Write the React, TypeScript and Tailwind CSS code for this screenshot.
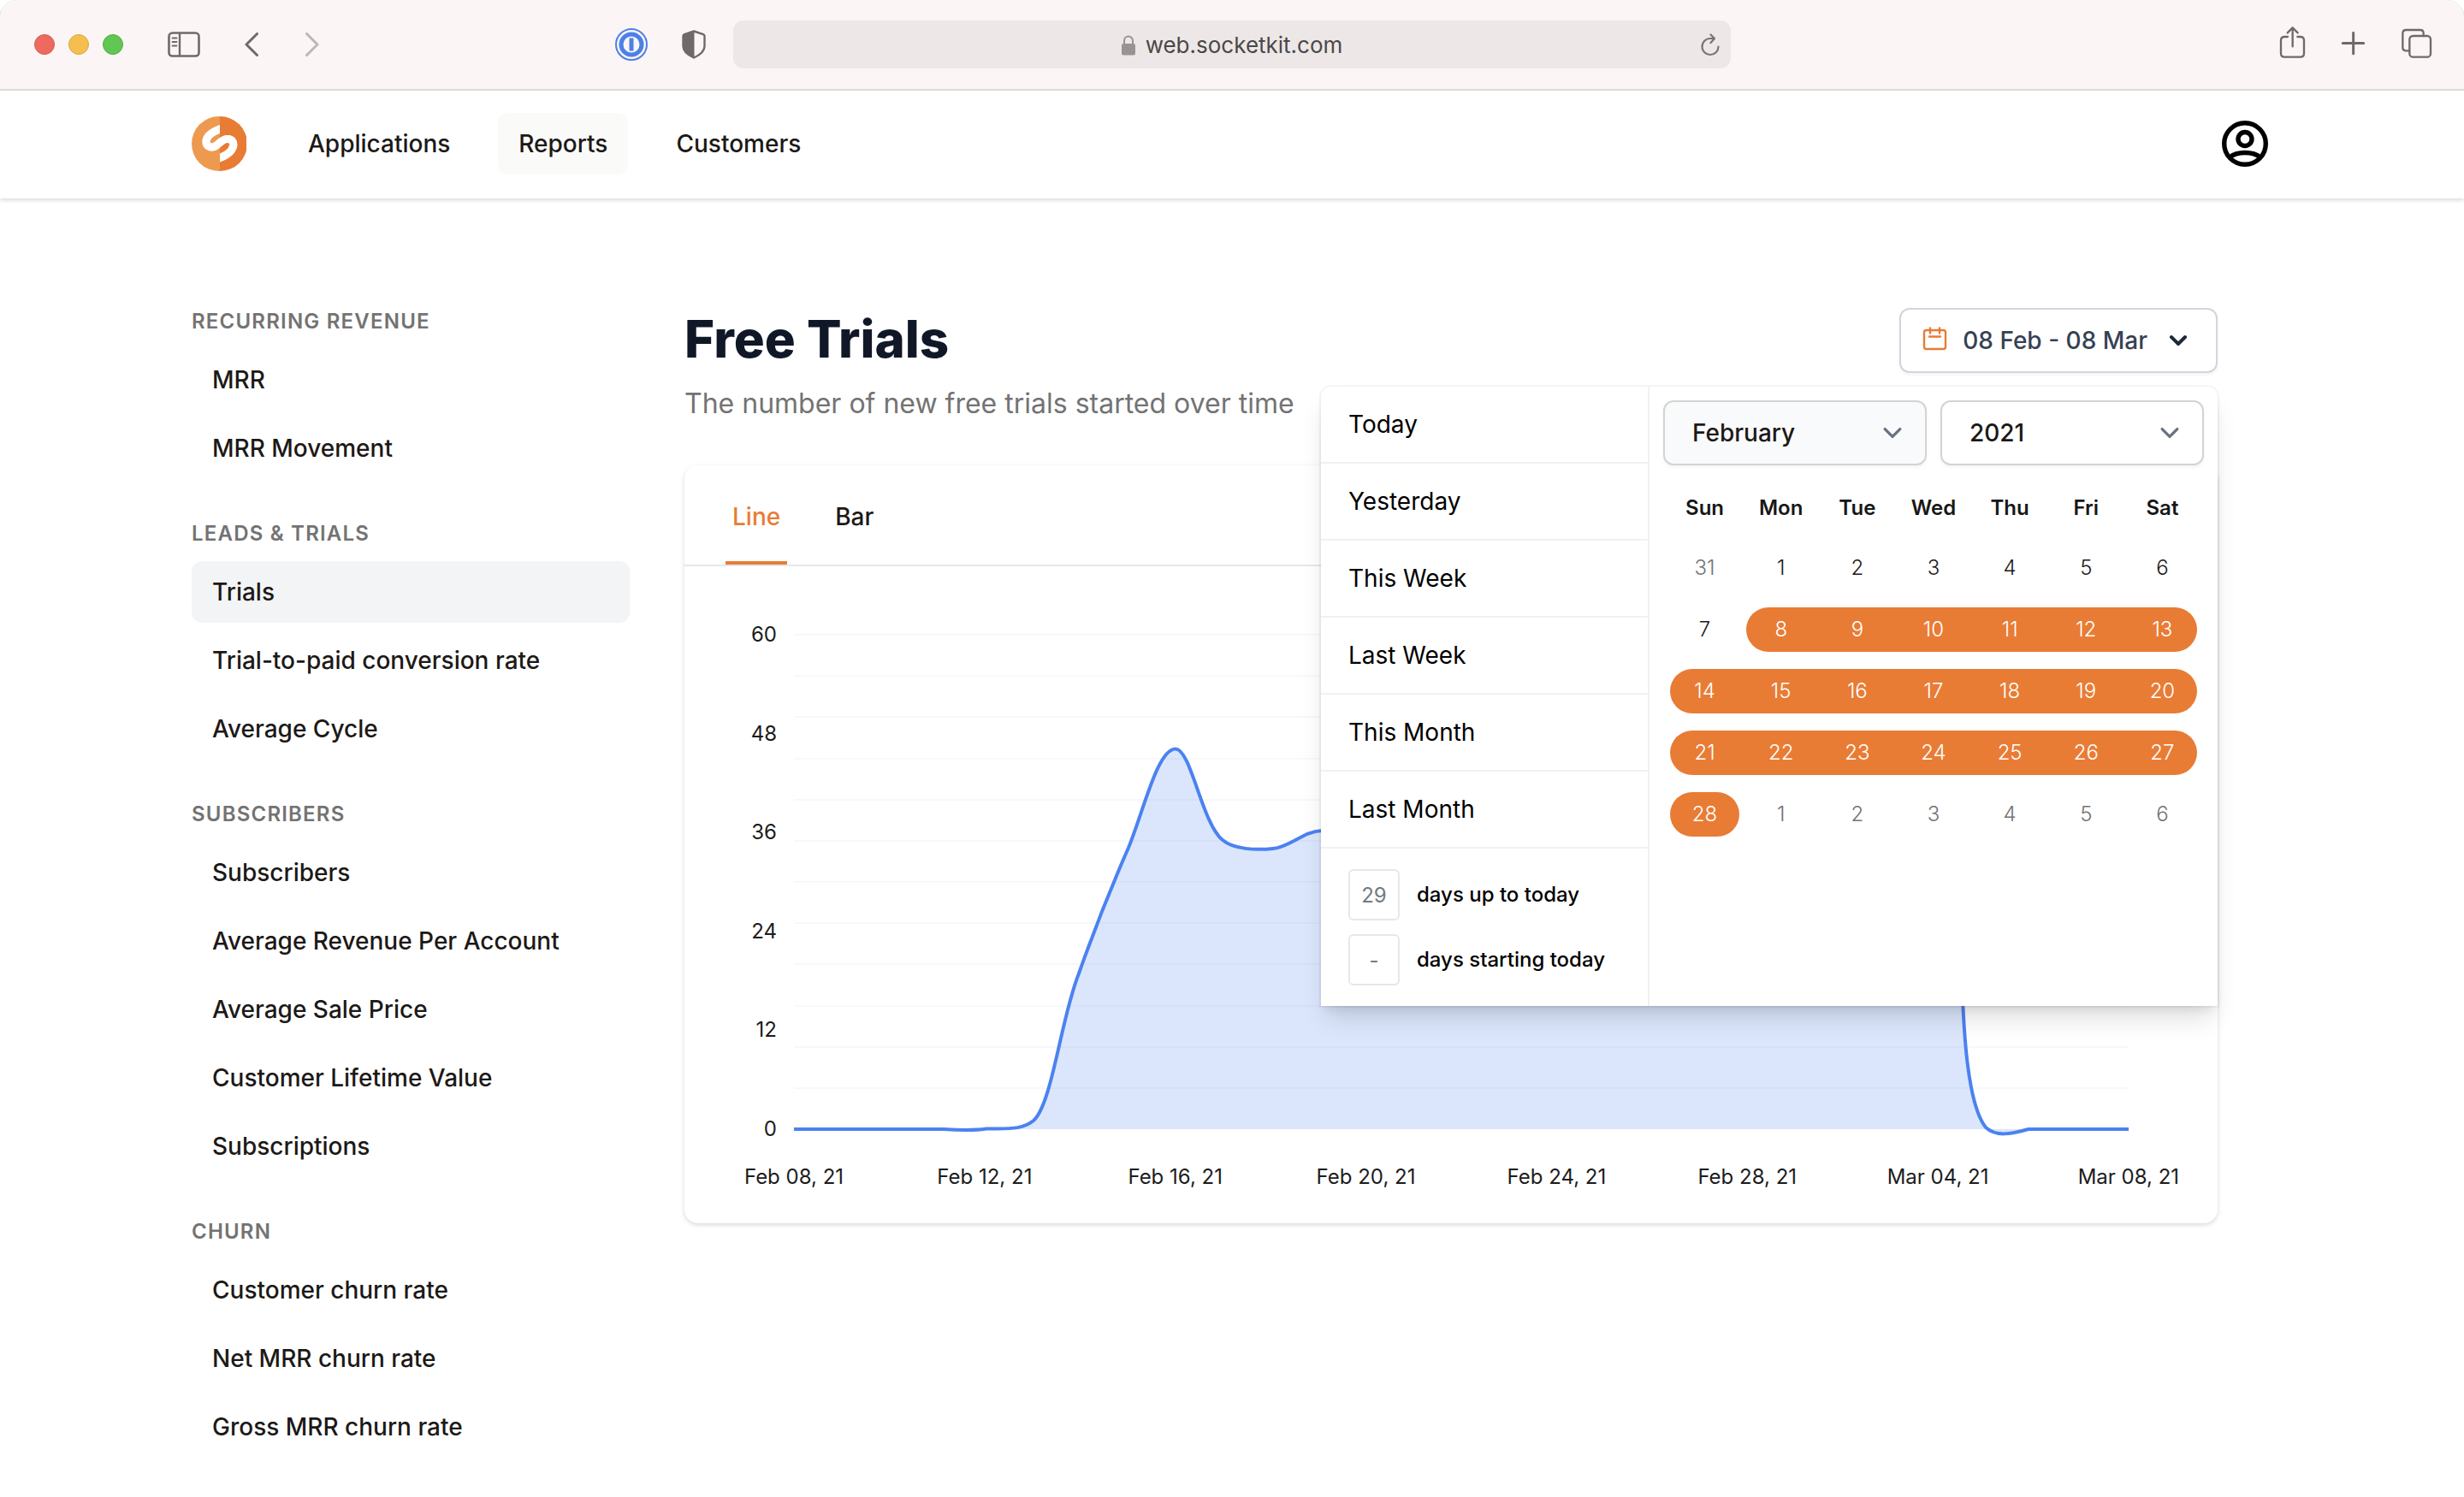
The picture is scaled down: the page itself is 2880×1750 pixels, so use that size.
import React from "react";
import { clsx } from "clsx";

const sections = [
  { title: "Recurring Revenue", items: ["MRR", "MRR Movement"] },
  { title: "Leads & Trials", items: ["Trials", "Trial-to-paid conversion rate", "Average Cycle"] },
  {
    title: "Subscribers",
    items: [
      "Subscribers",
      "Average Revenue Per Account",
      "Average Sale Price",
      "Customer Lifetime Value",
      "Subscriptions",
    ],
  },
  { title: "Churn", items: ["Customer churn rate", "Net MRR churn rate", "Gross MRR churn rate"] },
];

const presets = ["Today", "Yesterday", "This Week", "Last Week", "This Month", "Last Month"];
const weekdays = ["Sun", "Mon", "Tue", "Wed", "Thu", "Fri", "Sat"];
const weeks = [
  [31, 1, 2, 3, 4, 5, 6],
  [7, 8, 9, 10, 11, 12, 13],
  [14, 15, 16, 17, 18, 19, 20],
  [21, 22, 23, 24, 25, 26, 27],
  [28, 1, 2, 3, 4, 5, 6],
];
const months = [
  "January", "February", "March", "April", "May", "June",
  "July", "August", "September", "October", "November", "December",
];

const yTicks = [60, 48, 36, 24, 12, 0];
const xTicks = [
  "Feb 08, 21", "Feb 12, 21", "Feb 16, 21", "Feb 20, 21",
  "Feb 24, 21", "Feb 28, 21", "Mar 04, 21", "Mar 08, 21",
];

const curve =
  "M0 578 H175 C195 579.5 212 579.5 225 577.6 C252 577 266 579 280 568 C302 548 312 448 333 396 C351 345 373 290 391 249 C409 205 425 133.5 446 133.5 C464 133.5 477 221 501 240 C514 251 540 252 560 250 C580 248 595 230 617 229 C700 220 760 160 850 150 C1000 120 1150 160 1300 130 C1350 130 1362 300 1365 400 C1367 460 1371 548 1393 576 C1405 587 1422 584 1443 578 H1560";

function Chevron({ className, width }: { className: string; width: number }) {
  return (
    <svg viewBox="0 0 20 20" fill="none" className={className} aria-hidden="true">
      <path
        d="M6 8l4 4 4-4"
        stroke="currentColor"
        strokeWidth={width}
        strokeLinecap="round"
        strokeLinejoin="round"
      />
    </svg>
  );
}

function BrowserBar() {
  return (
    <div className="relative z-10 grid h-[104px] grid-cols-[1fr_minmax(0,1166px)_1fr] items-center rounded-t-[20px] bg-[#fbf5f5] text-[#706968] shadow-[0_1px_0_1px_#dcdad9]">
      <div className="flex items-center justify-between pl-10 pr-8">
        <div className="flex items-center">
          <div className="flex gap-4">
            <span className="size-6 rounded-full border border-[#d65a50] bg-[#ed6a5f]" />
            <span className="size-6 rounded-full border border-[#dba63f] bg-[#f5bf4f]" />
            <span className="size-6 rounded-full border border-[#52ae42] bg-[#62c655]" />
          </div>
          <button type="button" aria-label="Show sidebar" className="ml-[52px]">
            <svg viewBox="0 0 38 30" className="h-[30px] w-[38px]" fill="none" stroke="currentColor">
              <rect x="1.5" y="1.5" width="35" height="27" rx="4" strokeWidth="2.6" />
              <path d="M14 2v26" strokeWidth="2.4" />
              <path d="M5.5 7.5h5M5.5 12h5M5.5 16.5h5" strokeWidth="1.8" strokeLinecap="round" />
            </svg>
          </button>
          <button type="button" aria-label="Back" className="ml-[52px]">
            <svg viewBox="0 0 16 28" className="h-7 w-4" fill="none" stroke="currentColor" strokeWidth="3" strokeLinecap="round" strokeLinejoin="round">
              <path d="M14.5 1.5L2 14l12.500 12.500" />
            </svg>
          </button>
          <button type="button" aria-label="Forward" className="ml-[55px] text-[#bdb7b6]">
            <svg viewBox="0 0 16 28" className="h-7 w-4" fill="none" stroke="currentColor" strokeWidth="3" strokeLinecap="round" strokeLinejoin="round">
              <path d="M1.5 1.5L14 14 1.500 26.500" />
            </svg>
          </button>
        </div>
        <div className="flex items-center gap-10">
          <button type="button" aria-label="Password manager" className="text-[#4d80e6]">
            <svg viewBox="0 0 38 38" className="size-[38px]" fill="none" stroke="currentColor">
              <circle cx="19" cy="19" r="18" strokeWidth="2" />
              <circle cx="19" cy="19" r="12" strokeWidth="5" />
              <path d="M19 11.500v15" strokeWidth="5" />
            </svg>
          </button>
          <button type="button" aria-label="Privacy report">
            <svg viewBox="0 0 28 34" className="h-[34px] w-7" fill="none">
              <path d="M14 1.500L3 5.200C2 5.600 1.500 6.200 1.500 7.200V19c0 6 6 10.500 12.500 13.500C20.500 29.500 26.500 25 26.500 19V7.200c0-1-.5-1.600-1.500-2z" stroke="currentColor" strokeWidth="2.400" strokeLinejoin="round" />
              <path d="M14.500 1.500L3 5.200C2 5.600 1.500 6.200 1.500 7.200V19c0 6 6 10.500 13 13.500z" fill="currentColor" />
            </svg>
          </button>
        </div>
      </div>
      <div className="flex h-14 items-center rounded-xl bg-[#ede7e7] px-3 pt-0.5">
        <span className="w-6" />
        <div className="flex flex-1 items-center justify-center gap-3">
          <svg viewBox="0 0 16 24" className="h-6 w-4 text-[#999392]" aria-hidden="true">
            <rect x="0" y="10" width="16" height="13.500" rx="2" fill="currentColor" />
            <path d="M3 11V6.500a5 5 0 0 1 10 0V11" fill="none" stroke="currentColor" strokeWidth="2" />
          </svg>
          <span className="text-[26px] leading-8 text-[#4b4847]">web.socketkit.com</span>
        </div>
        <button type="button" aria-label="Reload" className="text-[#7a7473]">
          <svg viewBox="0 0 24 28" className="h-7 w-6" fill="none" stroke="currentColor" strokeWidth="2.200" strokeLinecap="round" strokeLinejoin="round">
            <path d="M21.500 15.500a9.500 9.500 0 1 1-9.500-9.500h4.500" />
            <path d="M12.500 1.500l4.500 4.500-4.500 5" />
          </svg>
        </button>
      </div>
      <div className="flex items-center justify-end pr-6">
        <button type="button" aria-label="Browser actions">
          <svg viewBox="0 0 600 240" className="h-20 w-[200px]" fill="none" stroke="currentColor" strokeWidth="7" strokeLinecap="round" strokeLinejoin="round">
            <path d="M54 93H43q-13 0-13 13v45q0 13 13 13h55q13 0 13-13v-45q0-13-13-13H88" />
            <path d="M71 127V61M53 79l18-18 18 18" />
            <path d="M284 79v73M247 115.500h73" strokeWidth="9" />
            <path d="M480 142h-11q-12 0-12-12V81q0-12 12-12h49q12 0 12 12v9" />
            <rect x="481" y="90" width="74" height="74" rx="12" />
          </svg>
        </button>
      </div>
    </div>
  );
}

function Logo() {
  return (
    <svg viewBox="24 24 192 192" className="size-16" role="img" aria-label="Socketkit">
      <defs>
        <clipPath id="ribbon">
          <path d="M24 24H123V90H216V216H123V150H24z" />
        </clipPath>
      </defs>
      <path d="M123 24h-3a96 96 0 0 0 0 192h3z" fill="#ed9a50" />
      <path d="M123 24a96 96 0 0 1 0 192z" fill="#e87c35" />
      <path
        d="M150 60C105 72 75 90 75 113C75 127 88 136 104 130C118 124 130 104 148 103C163 102 172 113 170 127C166 149 140 166 100 177"
        fill="none"
        stroke="#fff"
        strokeWidth="28"
        clipPath="url(#ribbon)"
      />
    </svg>
  );
}

function Header() {
  const links = ["Applications", "Reports", "Customers"];
  return (
    <header className="relative bg-white shadow-[0_2px_6px_rgba(0,0,0,0.1),0_2px_4px_rgba(0,0,0,0.06)]">
      <div className="mx-auto flex h-32 max-w-[2560px] items-center justify-between px-16">
        <div className="flex items-center gap-12">
          <a href="#home">
            <Logo />
          </a>
          <nav className="flex gap-8">
            {links.map((l) => (
              <a
                key={l}
                href={"#" + l.toLowerCase()}
                className={clsx(
                  "rounded-xl px-6 py-4 text-[28px] leading-10 font-medium text-[#1c1917]",
                  l === "Reports" && "bg-[#fafaf9]",
                )}
              >
                {l}
              </a>
            ))}
          </nav>
        </div>
        <button type="button" aria-label="Account" className="text-black">
          <svg viewBox="-5 -5 64 64" className="size-16" fill="none" stroke="currentColor" strokeWidth="5.400">
            <circle cx="27" cy="27" r="24.300" />
            <circle cx="27" cy="21.500" r="8" />
            <path d="M9 43C13 39.500 19.500 37.500 27 37.500S41 39.500 45 43" />
          </svg>
        </button>
      </div>
    </header>
  );
}

function Sidebar() {
  return (
    <aside className="flex w-[512px] shrink-0 flex-col gap-12">
      {sections.map((s) => (
        <section key={s.title} className="flex flex-col gap-4">
          <h2 className="text-2xl leading-8 font-semibold tracking-wider text-[#737373] uppercase">{s.title}</h2>
          <ul className="flex flex-col gap-2">
            {s.items.map((item) => (
              <li key={item}>
                <a
                  href="#report"
                  className={clsx(
                    "block rounded-xl px-6 py-4 text-[28px] leading-10 font-medium text-[#1c1917]",
                    item === "Trials" && "bg-gray-100",
                  )}
                >
                  {item}
                </a>
              </li>
            ))}
          </ul>
        </section>
      ))}
    </aside>
  );
}

function Select({ label, value, options, className }: { label: string; value: string; options: string[]; className: string }) {
  return (
    <div className="relative flex-1">
      <select
        aria-label={label}
        defaultValue={value}
        className={clsx(
          "h-[76px] w-full appearance-none rounded-xl border-2 border-stone-300 px-8 text-[28px] leading-10 font-medium text-[#1c1917] shadow-[0_2px_4px_rgba(0,0,0,0.05)]",
          className,
        )}
      >
        {options.map((o) => (
          <option key={o}>{o}</option>
        ))}
      </select>
      <Chevron width={1.5} className="pointer-events-none absolute top-1/2 right-[18px] size-11 -translate-y-1/2 text-gray-500" />
    </div>
  );
}

function dayStyle(week: number, col: number) {
  const outside = (week === 0 && col === 0) || (week === 4 && col > 0);
  const selected = (week === 1 && col > 0) || week === 2 || week === 3 || (week === 4 && col === 0);
  if (!selected) return outside ? "text-[#737373]" : "text-[#1c1917]";
  const start = col === 0 || (week === 1 && col === 1);
  const end = col === 6 || week === 4;
  return clsx("bg-[#e87c35] text-white", start && "ml-1 rounded-l-[26px]", end && "mr-1 rounded-r-[26px]", start && "pr-1", end && "pl-1");
}

function Calendar() {
  return (
    <table className="mx-auto w-full table-fixed border-collapse">
      <thead>
        <tr className="h-[68px]">
          {weekdays.map((d) => (
            <th key={d} scope="col" className="p-0 text-2xl leading-8 font-semibold text-[#171717]">
              {d}
            </th>
          ))}
        </tr>
      </thead>
      <tbody>
        {weeks.map((w, i) => (
          <tr key={i} className="h-[72px]">
            {w.map((d, j) => (
              <td key={j} className="p-0">
                <div className="flex">
                  <button type="button" className={clsx("h-[52px] flex-1 text-2xl leading-8 font-light", dayStyle(i, j))}>
                    {d}
                  </button>
                </div>
              </td>
            ))}
          </tr>
        ))}
      </tbody>
    </table>
  );
}

function DatePopover() {
  const counters = [
    { id: "days-up", value: "29", label: "days up to today" },
    { id: "days-from", value: "-", label: "days starting today" },
  ];
  return (
    <div className="absolute top-full right-0 z-10 mt-4 flex w-[1048px] rounded-t-xl bg-white shadow-[0_0_0_2px_rgba(0,0,0,0.04),0_20px_30px_-6px_rgba(0,0,0,0.13),0_8px_12px_-4px_rgba(0,0,0,0.08)]">
      <div className="w-96 border-r-2 border-[#f0f1f5]">
        {presets.map((p) => (
          <button
            key={p}
            type="button"
            className="block h-[90px] w-full border-b-2 border-[#f0f1f7] px-8 text-left text-[28px] leading-10 text-black"
          >
            {p}
          </button>
        ))}
        <div className="flex flex-col gap-4 px-8 py-6">
          {counters.map((c) => (
            <div key={c.id} className="flex items-center gap-5">
              <input
                id={c.id}
                defaultValue={c.value}
                className="size-[60px] rounded-md border-2 border-[#e2e8ec] bg-white text-center text-2xl leading-8 text-[#737b80]"
              />
              <label htmlFor={c.id} className="text-2xl leading-8 font-medium text-black">
                {c.label}
              </label>
            </div>
          ))}
        </div>
      </div>
      <div className="flex-1 p-4">
        <div className="flex gap-4">
          <Select label="Month" value="February" options={months} className="bg-gray-50" />
          <Select label="Year" value="2021" options={["2019", "2020", "2021"]} className="bg-white" />
        </div>
        <div className="px-1 pt-4">
          <Calendar />
        </div>
      </div>
    </div>
  );
}

function DateRange() {
  return (
    <div className="relative">
      <button
        type="button"
        className="flex h-[76px] items-center gap-4 rounded-xl border-2 border-gray-300 bg-white px-6 text-[28px] leading-10 font-medium text-gray-700 shadow-[0_2px_4px_rgba(0,0,0,0.05)]"
      >
        <svg viewBox="0 0 32 32" className="size-8 text-[#e87c35]" fill="none" stroke="currentColor" strokeWidth="2.400" strokeLinecap="round" aria-hidden="true">
          <rect x="3" y="4" width="25" height="22" rx="2.500" />
          <path d="M10 1.500v6M21 1.500v6M9 11.500h13" />
        </svg>
        <span>08 Feb - 08 Mar</span>
        <Chevron width={2} className="size-10 text-gray-800" />
      </button>
      <DatePopover />
    </div>
  );
}

function ChartCard() {
  return (
    <div className="mt-12 rounded-2xl bg-white shadow-[0_2px_6px_rgba(0,0,0,0.1),0_2px_4px_rgba(0,0,0,0.06)]">
      <div role="tablist" className="flex gap-12 border-b-2 border-gray-200 px-12 text-[28px] leading-10 font-medium">
        <button type="button" role="tab" aria-selected="true" className="border-b-4 border-[#e87c35] px-2 pt-10 pb-8 text-[#e87c35]">
          Line
        </button>
        <button type="button" role="tab" aria-selected="false" className="border-b-4 border-transparent px-2 pt-10 pb-8 text-[#1c1917]">
          Bar
        </button>
      </div>
      <div className="pt-16 pr-10 pb-[38px] pl-16 text-2xl leading-8 text-[#1c1c1c]">
        <div className="flex gap-5 pr-16">
          <div className="flex w-11 flex-col justify-between text-right">
            {yTicks.map((t) => (
              <span key={t}>{t}</span>
            ))}
          </div>
          <div className="flex-1 py-4">
            <svg viewBox="0 0 1560 578" preserveAspectRatio="none" className="block h-[578px] w-full overflow-visible" role="img" aria-label="Free trials per day">
              {Array.from({ length: 12 }, (_, i) => (
                <path key={i} d={`M0 ${Math.round((i * 578) / 12)}H1560`} stroke="#f8f8f8" strokeWidth="2" />
              ))}
              <path d={curve + " H0z"} fill="#4b82f0" fillOpacity="0.2" />
              <path d={curve} fill="none" stroke="#4b82f0" strokeWidth="4" vectorEffect="non-scaling-stroke" />
            </svg>
          </div>
        </div>
        <div className="mt-6 flex justify-between">
          {xTicks.map((t) => (
            <span key={t} className="w-32 text-center whitespace-nowrap">
              {t}
            </span>
          ))}
        </div>
      </div>
    </div>
  );
}

export default function App() {
  return (
    <div className="min-h-screen bg-white font-['Inter',sans-serif] antialiased">
      <BrowserBar />
      <Header />
      <div className="mx-auto flex max-w-[2560px] items-start gap-16 px-16 pt-32 pb-14">
        <Sidebar />
        <main className="min-w-0 flex-1 pr-16">
          <div className="flex items-start justify-between">
            <div>
              <h1 className="text-[60px] leading-[72px] font-extrabold text-gray-900">Free Trials</h1>
              <p className="mt-4 text-[32px] leading-[48px] text-[#737373]">
                The number of new free trials started over time
              </p>
            </div>
            <DateRange />
          </div>
          <ChartCard />
        </main>
      </div>
    </div>
  );
}
